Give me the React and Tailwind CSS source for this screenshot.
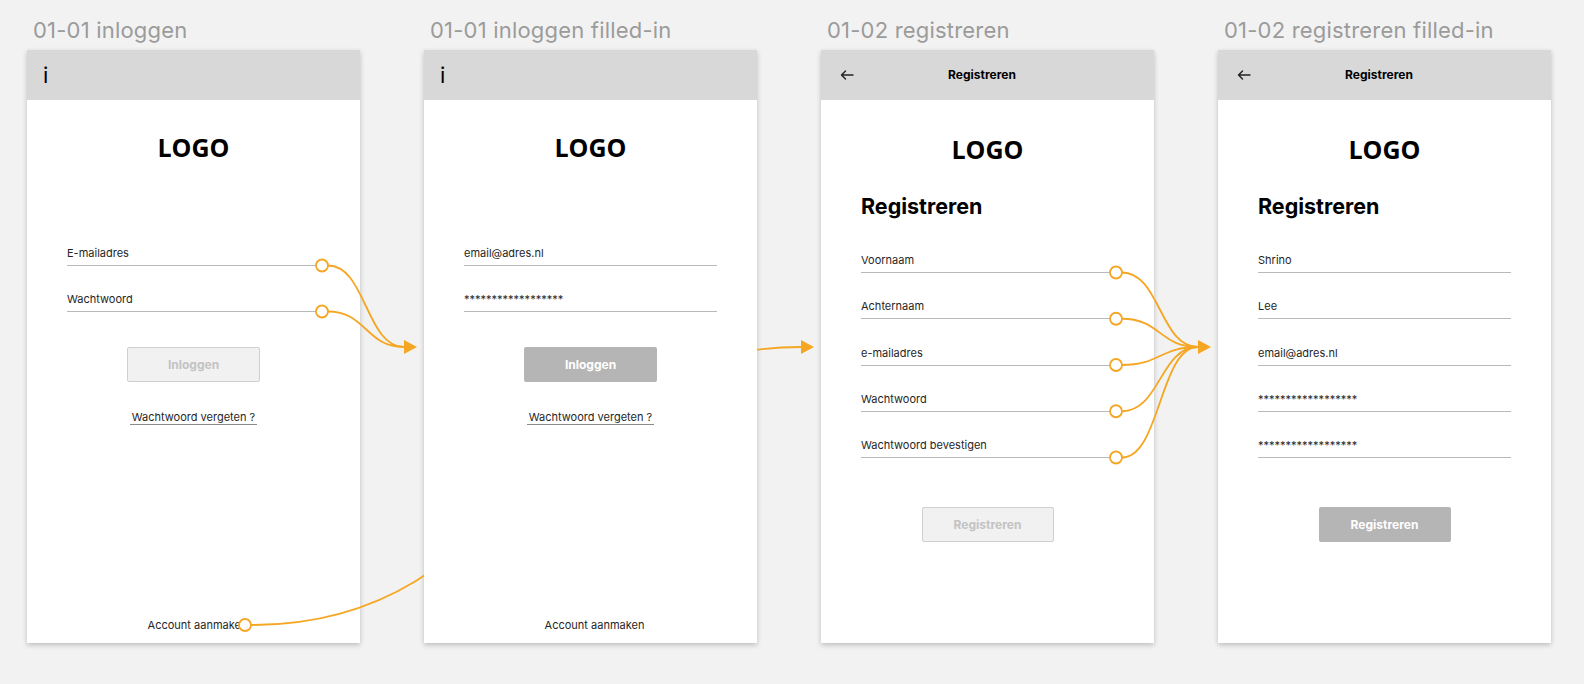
import React from 'react'

const ORANGE = '#F5A623'
const PW = '******************'

function Field({ text, className = '' }) {
  return (
    <div className={`border-b border-[#b9b9b9] pb-[5px] ${className}`}>
      <div className="text-[11px] leading-[14px] text-[#262626] whitespace-nowrap">{text}</div>
    </div>
  )
}

function Button({ label, filled, w }) {
  return (
    <div
      className={`${w} h-[35px] self-center rounded-[2px] flex items-center justify-center text-[12px] font-bold ${
        filled ? 'bg-[#b5b5b5] text-white' : 'bg-[#f1f1f1] border border-[#cfcfcf] text-[#c3c3c3]'
      }`}
    >
      {label}
    </div>
  )
}

function BackArrow() {
  return (
    <svg width="14" height="10" viewBox="0 0 14 10" fill="none" stroke="#222" strokeWidth="1.4" strokeLinecap="round" strokeLinejoin="round">
      <path d="M13 5H1.5M5.5 1L1.5 5l4 4" />
    </svg>
  )
}

function Artboard({ title, children }) {
  return (
    <div className="flex flex-col">
      <div className="h-[50px] pl-[6px] pt-[17px] text-[22px] leading-[26px] tracking-[0.2px] text-[#9b9b9b] whitespace-nowrap">{title}</div>
      <div className="w-[333px] h-[593px] bg-white shadow-[0_2px_5px_rgba(0,0,0,0.22)] flex flex-col">
        {children}
      </div>
    </div>
  )
}

function Logo({ className = '' }) {
  return (
    <div className={`text-center text-[25px] leading-[30px] font-bold text-black font-['Open_Sans',sans-serif] ${className}`}>
      LOGO
    </div>
  )
}

function LoginCard({ filled }) {
  return (
    <>
      <div className="h-[50px] bg-[#d8d8d8] flex items-center pl-[16px]">
        <span className="text-[22px] leading-none text-black">i</span>
      </div>
      <div className="flex-1 flex flex-col px-[40px]">
        <Logo className="mt-[32px]" />
        <Field className="mt-[84px]" text={filled ? 'email@adres.nl' : 'E-mailadres'} />
        <Field className="mt-[26px]" text={filled ? PW : 'Wachtwoord'} />
        <div className="mt-[35px] self-center">
          <Button label="Inloggen" filled={filled} w="w-[133px]" />
        </div>
        <div className="mt-[28px] self-center border-b border-[#8a8a8a] px-[2px] text-[11px] leading-[14px] text-[#262626]">
          Wachtwoord vergeten ?
        </div>
        <div className="mt-auto mb-[11px] self-center pl-[8px] text-[11px] leading-[14px] text-[#262626] whitespace-nowrap">
          Account aanmaken
        </div>
      </div>
    </>
  )
}

function RegisterCard({ filled }) {
  const fields = filled
    ? ['Shrino', 'Lee', 'email@adres.nl', PW, PW]
    : ['Voornaam', 'Achternaam', 'e-mailadres', 'Wachtwoord', 'Wachtwoord bevestigen']
  return (
    <>
      <div className="h-[50px] bg-[#d8d8d8] grid grid-cols-[1fr_auto_1fr] items-center pl-[19px] pr-[30px]">
        <BackArrow />
        <span className="text-[12px] font-bold text-black">Registreren</span>
        <span />
      </div>
      <div className="flex-1 flex flex-col px-[40px]">
        <Logo className="mt-[34px]" />
        <div className="mt-[30px] text-[21.5px] leading-[24px] font-bold text-black">Registreren</div>
        {fields.map((f, i) => (
          <Field key={i} className={i === 0 ? 'mt-[35px]' : 'mt-[26.25px]'} text={f} />
        ))}
        <div className="mt-[49px] self-center">
          <Button label="Registreren" filled={filled} w="w-[132px]" />
        </div>
      </div>
    </>
  )
}

function Arrowhead({ x }) {
  return <polygon points={`${x},347 ${x - 13},340 ${x - 13},354`} fill={ORANGE} />
}

function Links() {
  const regY = [272.5, 318.75, 365, 411.25, 457.5]
  return (
    <svg className="absolute inset-0 pointer-events-none" width="1584" height="684" fill="none">
      <defs>
        <mask id="hide-card-2">
          <rect width="1584" height="684" fill="white" />
          <rect x="424" y="50" width="333" height="593" fill="black" />
        </mask>
      </defs>

      {/* login -> login filled-in */}
      <path d="M328 265.5C366 265.5 366 347 404 347" stroke={ORANGE} strokeWidth="1.8" />
      <path d="M328 311.5C366 311.5 366 347 404 347" stroke={ORANGE} strokeWidth="1.8" />
      <circle cx="322" cy="265.5" r="6" fill="white" stroke={ORANGE} strokeWidth="1.8" />
      <circle cx="322" cy="311.5" r="6" fill="white" stroke={ORANGE} strokeWidth="1.8" />
      <Arrowhead x={417} />

      {/* account aanmaken -> registreren */}
      <path d="M251 625C527 625 527 347 801 347" stroke={ORANGE} strokeWidth="1.8" mask="url(#hide-card-2)" />
      <circle cx="245" cy="625" r="6" fill="white" stroke={ORANGE} strokeWidth="1.8" />
      <Arrowhead x={814} />

      {/* registreren -> filled-in */}
      {regY.map((y) => (
        <path key={y} d={`M1122 ${y}C1160 ${y} 1160 347 1198 347`} stroke={ORANGE} strokeWidth="1.8" />
      ))}
      {regY.map((y) => (
        <circle key={'c' + y} cx="1116" cy={y} r="6" fill="white" stroke={ORANGE} strokeWidth="1.8" />
      ))}
      <Arrowhead x={1211} />
    </svg>
  )
}

export default function App() {
  return (
    <div className="relative w-[1584px] h-[684px] overflow-hidden bg-[#f2f2f2] font-['Inter',sans-serif]">
      <div className="flex gap-[64px] pl-[27px]">
        <Artboard title="01-01 inloggen">
          <LoginCard />
        </Artboard>
        <Artboard title="01-01 inloggen filled-in">
          <LoginCard filled />
        </Artboard>
        <Artboard title="01-02 registreren">
          <RegisterCard />
        </Artboard>
        <Artboard title="01-02 registreren filled-in">
          <RegisterCard filled />
        </Artboard>
      </div>
      <Links />
    </div>
  )
}
